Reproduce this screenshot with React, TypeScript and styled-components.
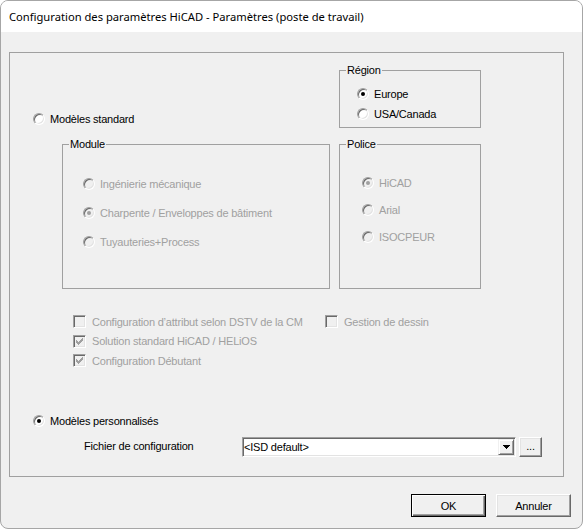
import styled, { createGlobalStyle } from "styled-components";

const GlobalStyle = createGlobalStyle`
  html, body {
    margin: 0;
    padding: 0;
    background: #ffffff;
  }
  body {
    font-family: "Liberation Sans", Arial, sans-serif;
  }
`;

const Window = styled.div`
  width: 583px;
  height: 529px;
  box-sizing: border-box;
  border: 1px solid #a6a6a6;
  border-radius: 8px;
  overflow: hidden;
  background: #f0f0f0;
  display: flex;
  flex-direction: column;
`;

const TitleBar = styled.div`
  height: 31px;
  flex: none;
  background: #ffffff;
  display: flex;
  align-items: center;
  padding-left: 8px;
  font-family: "Noto Sans", "Open Sans", sans-serif;
  font-size: 11.2px;
  color: #000000;
`;

const Body = styled.div`
  flex: 1;
  display: flex;
  flex-direction: column;
  padding: 20px 11px 0 8px;
  font-family: "Liberation Sans", Arial, sans-serif;
  font-size: 11px;
  letter-spacing: -0.2px;
  color: #000000;
`;

const Frame = styled.div`
  height: 425px;
  box-sizing: border-box;
  margin-right: 7px;
  border: 1px solid #a0a0a0;
  padding: 11px 0 19px 0;
  display: flex;
  flex-direction: column;
`;

const TopGrid = styled.div`
  display: grid;
  grid-template-columns: 43px 268px 142px;
  grid-template-rows: 64px 151px;
  column-gap: 9px;
  row-gap: 10px;
`;

const StandardRow = styled.div`
  grid-column: 1 / 3;
  align-self: end;
  padding-left: 23px;
  margin-bottom: 2px;
`;

const GroupBox = styled.fieldset<{ $col: string }>`
  grid-column: ${(p) => p.$col};
  margin: 0;
  padding: 0;
  min-width: 0;
  box-sizing: border-box;
  border: 1px solid #a0a0a0;
`;

const Legend = styled.legend`
  margin-left: 6px;
  padding: 0 1px;
  line-height: 13px;
  color: #000000;
`;

const OptionList = styled.div<{ $top: number; $left: number; $gap: number }>`
  display: flex;
  flex-direction: column;
  padding: ${(p) => p.$top}px 0 0 ${(p) => p.$left}px;
  gap: ${(p) => p.$gap}px;
`;

const OptionRow = styled.label<{ $disabled?: boolean }>`
  display: flex;
  align-items: center;
  height: 14px;
  line-height: 14px;
  white-space: nowrap;
  color: ${(p) => (p.$disabled ? "#a0a0a0" : "#000000")};
`;

const RadioMark = styled.span<{ $checked?: boolean; $disabled?: boolean }>`
  position: relative;
  flex: none;
  width: 12px;
  height: 12px;
  box-sizing: border-box;
  border-radius: 50%;
  border: 1px solid;
  border-color: #a0a0a0 #ffffff #ffffff #a0a0a0;
  box-shadow: inset 1px 1px #696969, inset -1px -1px #e3e3e3;
  background: ${(p) => (p.$disabled ? "#f0f0f0" : "#ffffff")};
  margin-right: 5px;
  &::after {
    content: "";
    display: ${(p) => (p.$checked ? "block" : "none")};
    position: absolute;
    left: 3px;
    top: 3px;
    width: 4px;
    height: 4px;
    border-radius: 50%;
    background: ${(p) => (p.$disabled ? "#a0a0a0" : "#000000")};
  }
`;

const CheckMark = styled.span<{ $disabled?: boolean }>`
  flex: none;
  width: 13px;
  height: 13px;
  box-sizing: border-box;
  border: 1px solid;
  border-color: #a0a0a0 #ffffff #ffffff #a0a0a0;
  box-shadow: inset 1px 1px #696969, inset -1px -1px #e3e3e3;
  background: ${(p) => (p.$disabled ? "#f0f0f0" : "#ffffff")};
  margin-right: 6px;
  svg {
    display: block;
    margin: -1px;
  }
`;

const Checks = styled.div`
  display: grid;
  grid-template-columns: 252px auto;
  grid-auto-rows: 19.5px;
  align-items: center;
  justify-content: start;
  margin-top: 23px;
  padding-left: 63px;
`;

const Custom = styled.div`
  margin-top: auto;
  display: flex;
  flex-direction: column;
`;

const CustomRow = styled.div`
  padding-left: 23px;
  margin-bottom: 9px;
`;

const FileRow = styled.div`
  display: flex;
  align-items: center;
  height: 20px;
  padding-left: 74px;
`;

const FileLabel = styled.span`
  width: 158px;
  flex: none;
  margin-top: -3px;
`;

const Combo = styled.div`
  width: 274px;
  height: 20px;
  box-sizing: border-box;
  border: 1px solid;
  border-color: #a0a0a0 #ffffff #ffffff #a0a0a0;
  box-shadow: inset 1px 1px #696969, inset -1px -1px #e3e3e3;
  background: #ffffff;
  display: flex;
  align-items: center;
  padding: 0 1px 0 1px;
`;

const ComboText = styled.span`
  flex: 1;
`;

const DropButton = styled.span`
  width: 16px;
  height: 16px;
  box-sizing: border-box;
  border: 1px solid;
  border-color: #f0f0f0 #696969 #696969 #f0f0f0;
  box-shadow: inset 1px 1px #ffffff, inset -1px -1px #a0a0a0;
  background: #f0f0f0;
  display: flex;
  align-items: center;
  justify-content: center;
`;

const Button = styled.button<{ $default?: boolean; $w: number; $h: number }>`
  width: ${(p) => p.$w}px;
  height: ${(p) => p.$h}px;
  box-sizing: border-box;
  padding: 0;
  font-family: "Liberation Sans", Arial, sans-serif;
  font-size: 11px;
  letter-spacing: -0.2px;
  color: #000000;
  background: #f0f0f0;
  border: 1px solid;
  border-color: ${(p) =>
    p.$default ? "#000000" : "#ffffff #696969 #696969 #ffffff"};
  box-shadow: ${(p) =>
    p.$default
      ? "inset 1px 1px #ffffff, inset -1px -1px #696969, inset -2px -2px #a0a0a0"
      : "inset -1px -1px #a0a0a0, inset 1px 1px #e3e3e3"};
`;

const Ellipsis = styled(Button)`
  margin-left: 3px;
  line-height: 10px;
  padding-bottom: 2px;
`;

const Buttons = styled.div`
  display: flex;
  justify-content: flex-end;
  gap: 10px;
  margin-top: 17px;
`;

function Radio({
  label,
  checked,
  disabled,
}: {
  label: string;
  checked?: boolean;
  disabled?: boolean;
}) {
  return (
    <OptionRow $disabled={disabled}>
      <RadioMark $checked={checked} $disabled={disabled} />
      {label}
    </OptionRow>
  );
}

function Check({
  label,
  checked,
  disabled,
}: {
  label: string;
  checked?: boolean;
  disabled?: boolean;
}) {
  return (
    <OptionRow $disabled={disabled}>
      <CheckMark $disabled={disabled}>
        {checked && (
          <svg width="13" height="13" viewBox="0 0 13 13" shapeRendering="crispEdges">
            <polygon
              points="3,5 5,7 10,2 10,5 5,10 3,8"
              fill={disabled ? "#a0a0a0" : "#000000"}
            />
          </svg>
        )}
      </CheckMark>
      {label}
    </OptionRow>
  );
}

export default function App() {
  return (
    <>
      <GlobalStyle />
      <Window>
        <TitleBar>Configuration des paramètres HiCAD - Paramètres (poste de travail)</TitleBar>
        <Body>
          <Frame>
            <TopGrid>
              <StandardRow>
                <Radio label="Modèles standard" />
              </StandardRow>
              <GroupBox $col="3">
                <Legend>Région</Legend>
                <OptionList $top={10} $left={17} $gap={6}>
                  <Radio label="Europe" checked />
                  <Radio label="USA/Canada" />
                </OptionList>
              </GroupBox>
              <GroupBox $col="2">
                <Legend>Module</Legend>
                <OptionList $top={26} $left={20} $gap={15}>
                  <Radio label="Ingénierie mécanique" disabled />
                  <Radio label="Charpente / Enveloppes de bâtiment" checked disabled />
                  <Radio label="Tuyauteries+Process" disabled />
                </OptionList>
              </GroupBox>
              <GroupBox $col="3">
                <Legend>Police</Legend>
                <OptionList $top={25} $left={22} $gap={13}>
                  <Radio label="HiCAD" checked disabled />
                  <Radio label="Arial" disabled />
                  <Radio label="ISOCPEUR" disabled />
                </OptionList>
              </GroupBox>
            </TopGrid>
            <Checks>
              <Check label="Configuration d’attribut selon DSTV de la CM" disabled />
              <Check label="Gestion de dessin" disabled />
              <Check label="Solution standard HiCAD / HELiOS" checked disabled />
              <span />
              <Check label="Configuration Débutant" checked disabled />
            </Checks>
            <Custom>
              <CustomRow>
                <Radio label="Modèles personnalisés" checked />
              </CustomRow>
              <FileRow>
                <FileLabel>Fichier de configuration</FileLabel>
                <Combo>
                  <ComboText>&lt;ISD default&gt;</ComboText>
                  <DropButton>
                    <svg width="7" height="4" viewBox="0 0 7 4" shapeRendering="crispEdges">
                      <polygon points="0,0 7,0 3.5,4" fill="#000000" />
                    </svg>
                  </DropButton>
                </Combo>
                <Ellipsis $w={23} $h={20}>...</Ellipsis>
              </FileRow>
            </Custom>
          </Frame>
          <Buttons>
            <Button $default $w={75} $h={23}>
              OK
            </Button>
            <Button $w={75} $h={23}>
              Annuler
            </Button>
          </Buttons>
        </Body>
      </Window>
    </>
  );
}
